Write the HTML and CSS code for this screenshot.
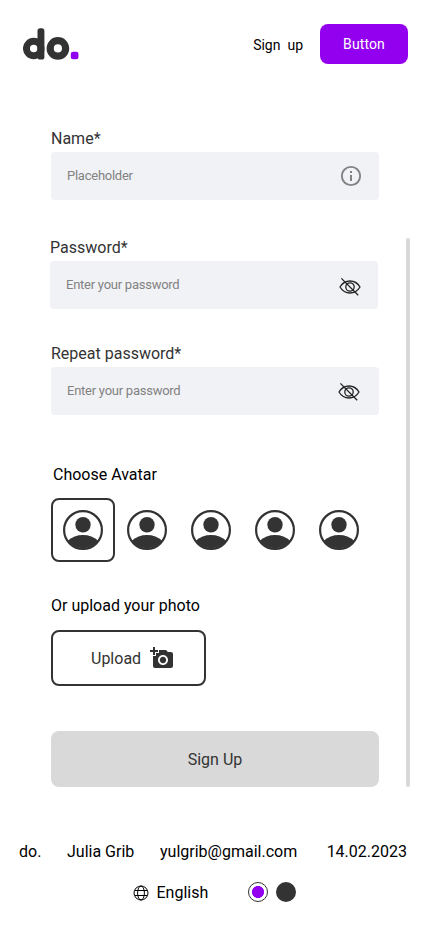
FILE: index.html
```html
<!DOCTYPE html>
<html lang="en">
<head>
<meta charset="utf-8">
<meta name="viewport" content="width=device-width, initial-scale=1">
<title>Sign up</title>
<link rel="stylesheet" href="styles.css">
</head>
<body>
<svg class="symbols" width="0" height="0">
  <symbol id="eye-off" viewBox="0 0 24 24">
    <g fill="none" stroke="#222" stroke-width="1.300">
      <path d="M2 12C4.400 8 7.800 6 12 6S19.600 8 22 12C19.600 16 16.200 18 12 18S4.400 16 2 12Z"/>
      <circle cx="12" cy="12" r="4.200"/>
      <path d="M3.400 3.400L20.200 20.200"/>
    </g>
  </symbol>
  <symbol id="avatar" viewBox="0 0 40 40">
    <circle cx="20" cy="20" r="18.900" fill="none" stroke="#333" stroke-width="2.200"/>
    <circle cx="20" cy="14.800" r="7.700" fill="#333"/>
    <path d="M5 30.500C9 27 14 25 20 25S31 27 35 30.500A18.400 18.400 0 0 1 5 30.500Z" fill="#333"/>
  </symbol>
</svg>
<header class="header">
  <svg class="logo" viewBox="0 0 56 32" role="img" aria-label="do.">
    <circle cx="10.700" cy="20.500" r="7.250" fill="none" stroke="#333" stroke-width="7"/>
    <rect x="14.500" y="0.300" width="6.900" height="31.200" rx="2.600" fill="#333"/>
    <circle cx="34.900" cy="20.400" r="7.700" fill="none" stroke="#333" stroke-width="7.200"/>
    <rect x="47.800" y="23.800" width="7.700" height="7.500" rx="2.200" fill="#9300f0"/>
  </svg>
  <a class="signup-link">Sign&nbsp; up</a>
  <button class="header-button">Button</button>
</header>
<main class="main">
  <form class="form">
    <div class="field field-name">
      <label class="label">Name*</label>
      <div class="input"><span>Placeholder</span>
        <svg class="info" viewBox="0 0 24 24"><circle cx="12" cy="12" r="9.150" fill="none" stroke="#828282" stroke-width="1.900"/><path d="M11 7h2v2h-2zM11 11h2v6h-2z" fill="#828282"/></svg>
      </div>
    </div>
    <div class="field field-password">
      <label class="label">Password*</label>
      <div class="input"><span>Enter your password</span><svg class="eye"><use href="#eye-off"/></svg></div>
    </div>
    <div class="field field-repeat">
      <label class="label">Repeat password*</label>
      <div class="input"><span>Enter your password</span><svg class="eye"><use href="#eye-off"/></svg></div>
    </div>
    <h2 class="title title-avatar">Choose Avatar</h2>
    <div class="avatars">
      <div class="avatar selected"><svg><use href="#avatar"/></svg></div>
      <div class="avatar"><svg><use href="#avatar"/></svg></div>
      <div class="avatar"><svg><use href="#avatar"/></svg></div>
      <div class="avatar"><svg><use href="#avatar"/></svg></div>
      <div class="avatar"><svg><use href="#avatar"/></svg></div>
    </div>
    <h2 class="title title-photo">Or upload your photo</h2>
    <button type="button" class="upload"><span>Upload</span>
      <svg viewBox="0 0 24 24" fill="#333"><path d="M3 4V1h2v3h3v2H5v3H3V6H0V4h3zm3 6V7h3V4h7l1.830 2H21c1.100 0 2 .9 2 2v12c0 1.100-.9 2-2 2H5c-1.100 0-2-.9-2-2V10h3zm7 9c2.760 0 5-2.240 5-5s-2.240-5-5-5-5 2.240-5 5 2.240 5 5 5zm-3.200-5c0 1.770 1.430 3.200 3.200 3.200s3.200-1.430 3.200-3.200-1.430-3.200-3.200-3.200-3.200 1.430-3.200 3.200z"/></svg>
    </button>
    <button type="button" class="submit">Sign Up</button>
  </form>
  <div class="scrollbar"></div>
</main>
<footer class="footer">
  <div class="footer-info">
    <span class="brand">do.</span><span class="author">Julia Grib</span><span>yulgrib@gmail.com</span><span class="date">14.02.2023</span>
  </div>
  <div class="footer-settings">
    <svg class="globe" viewBox="0 0 16 16" fill="none" stroke="#000"><circle cx="8" cy="8" r="7"/><ellipse cx="8" cy="8" rx="3.400" ry="7"/><path d="M1.800 5.500h12.400M1.800 10.500h12.400"/></svg>
    <span class="language">English</span>
    <span class="theme theme-light"></span>
    <span class="theme theme-dark"></span>
  </div>
</footer>
</body>
</html>
```
FILE: styles.css
```css
* { box-sizing: border-box; }
body {
  margin: 0;
  width: 430px;
  height: 932px;
  overflow: hidden;
  background: #fff;
  color: #000;
  font: 400 16px/24px Roboto, sans-serif;
}
svg { display: block; flex: none; }
button { font: inherit; border: 0; padding: 0; }
.symbols { display: none; }
.header {
  display: flex;
  align-items: center;
  height: 64px;
  padding: 24px 22px 0 23px;
}
.logo { width: 56px; height: 32px; }
.signup-link {
  margin: 2px 17px 0 auto;
  font-size: 14px;
  white-space: nowrap;
}
.header-button {
  width: 88px;
  height: 40px;
  border-radius: 8px;
  background: #9300f0;
  color: #fff;
  font-size: 14px;
  letter-spacing: 0.1px;
}
.main {
  display: flex;
  justify-content: space-between;
  height: 723px;
  padding: 63px 20px 0 51px;
}
.form { width: 328px; }
.field { height: 73px; }
.field-password { margin: 36px 0 0 -1px; width: 328px; }
.field-repeat { margin-top: 33px; }
.label { display: block; height: 25px; color: #333; }
.input {
  display: flex;
  align-items: center;
  justify-content: space-between;
  height: 48px;
  padding: 0 16px;
  border-radius: 4px;
  background: #f1f2f6;
  color: #828282;
  font-size: 13px;
  letter-spacing: -0.25px;
}
.info, .eye { width: 24px; height: 24px; }
.eye { margin: 3px 0.500px 0 0; }
.field-repeat .eye { margin: 1px 2px 0 0; }
.title { margin: 0; font-size: 16px; font-weight: 400; }
.title-avatar { padding: 48px 0 0 2px; }
.avatars { display: flex; margin-top: 11px; }
.avatar {
  display: flex;
  align-items: center;
  justify-content: center;
  width: 64px;
  height: 64px;
  flex: none;
}
.avatar.selected { border: 2px solid #333; border-radius: 8px; }
.avatar svg { width: 40px; height: 40px; }
.title-photo { margin-top: 32px; }
.upload {
  display: flex;
  align-items: center;
  width: 155px;
  height: 56px;
  margin-top: 12px;
  padding-left: 38px;
  gap: 9px;
  border: 2px solid #333;
  border-radius: 8px;
  background: #fff;
  color: #333;
}
.upload span { padding-top: 2px; }
.upload svg { width: 24px; height: 24px; }
.submit {
  width: 328px;
  height: 56px;
  margin-top: 45px;
  padding-top: 2px;
  border-radius: 8px;
  background: #d9d9d9;
  color: #333;
}
.scrollbar {
  width: 4px;
  height: 549px;
  margin-top: 111px;
  border-radius: 2px;
  background: #d9d9d9;
}
.footer { padding: 53px 23px 0 19px; }
.footer-info { display: flex; white-space: nowrap; }
.brand { width: 48px; }
.author { width: 93px; }
.date { margin-left: auto; }
.footer-settings {
  display: flex;
  align-items: center;
  height: 24px;
  margin-top: 17px;
  padding-left: 114px;
}
.globe { width: 16px; height: 16px; }
.language { width: 92px; margin: -1px 0 0 7.500px; }
.theme { width: 20px; height: 20px; margin-top: -2px; border-radius: 50%; }
.theme-light {
  margin-left: -0.500px;
  border: 1px solid #333;
  background: radial-gradient(circle, #9300f0 5.700px, #fff 6.300px);
}
.theme-dark { margin-left: 8px; background: #333; }
```
